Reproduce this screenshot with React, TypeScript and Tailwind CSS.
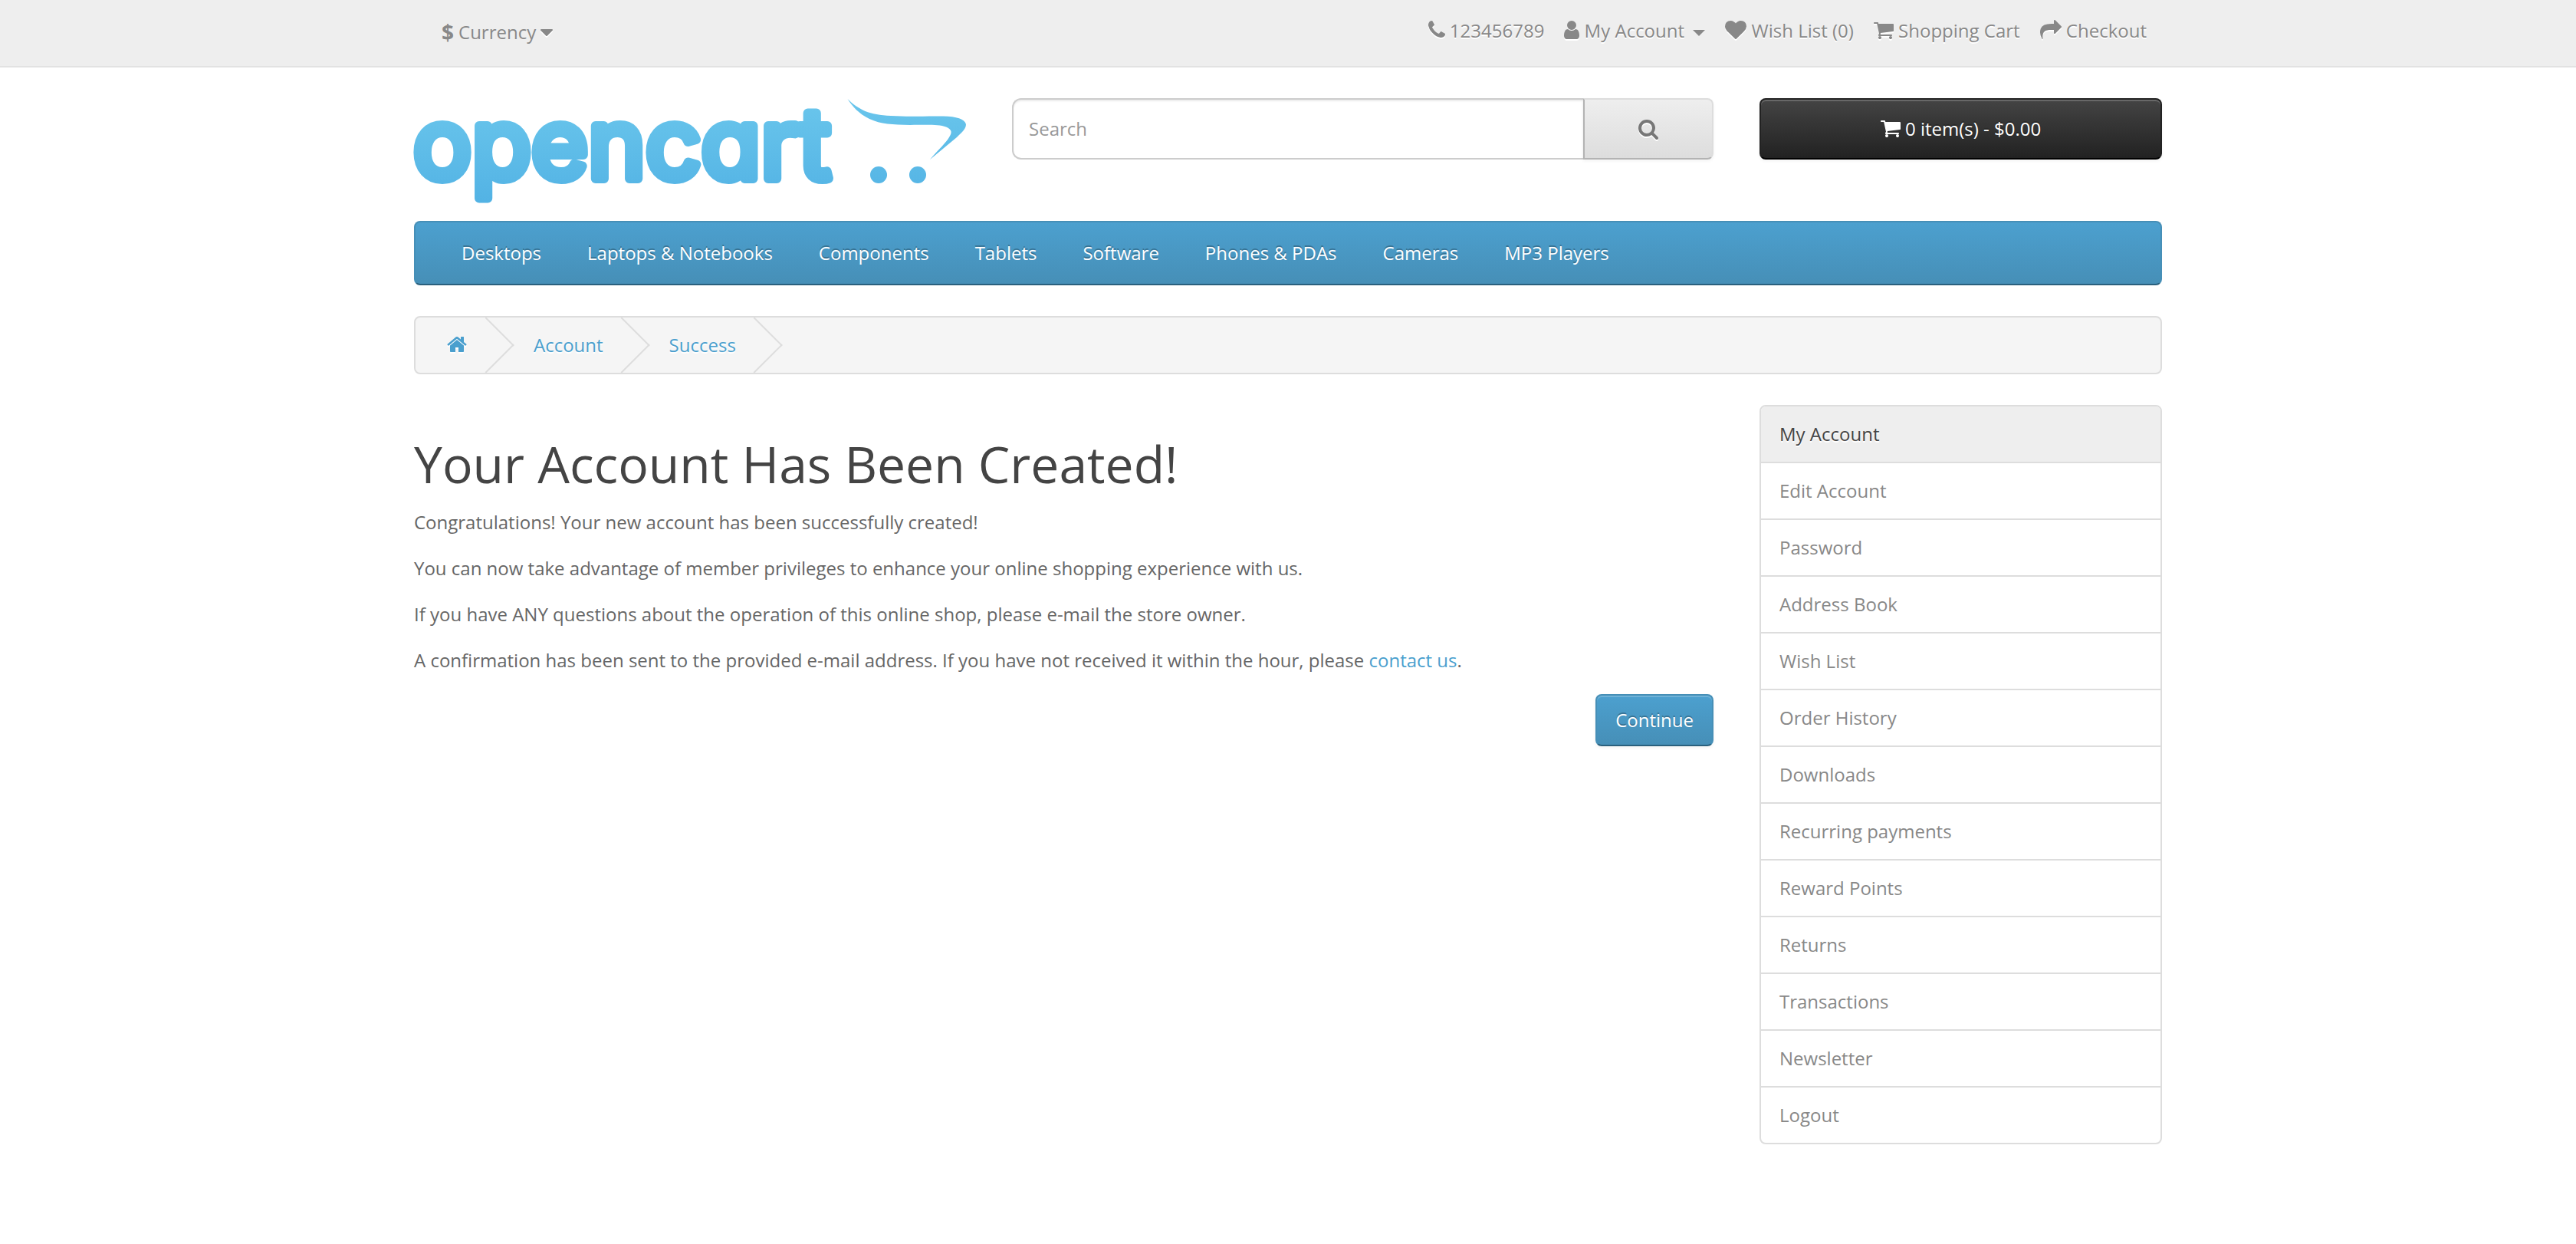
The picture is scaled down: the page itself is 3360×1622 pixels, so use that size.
import type { ReactNode } from 'react';

type IconName = 'phone' | 'user' | 'heart' | 'cart' | 'share' | 'search' | 'home';

const icons: Record<IconName, { x: number; width: number; d: string }> = {
  phone: {
    x: 192,
    width: 1408,
    d: 'M1600 1240q0 27-10 70.5t-21 68.5q-21 50-122 106-94 51-186 51-27 0-53-3.5t-57-12.5-47-14.5-55.5-20.5-49.5-18q-98-35-175-83-127-79-264-216t-216-264q-48-77-83-175-3-9-18-49.5t-20.5-55.5-14.5-47-12.5-57-3.5-53q0-92 51-186 56-101 106-122 25-11 68.5-21t70.5-10q14 0 21 3 18 6 53 76 11 19 30 54t35 63.5 31 53.5q3 4 17.5 25t21.5 35.5 7 28.5q0 20-28.5 50t-62 55-62 53-28.5 46q0 9 5 22.5t8.5 20.5 14 24 11.5 19q76 137 174 235t235 174q2 1 19 11.5t24 14 20.5 8.5 22.5 5q18 0 46-28.5t53-62 55-62 50-28.5q14 0 28.5 7t35.5 21.5 25 17.5q25 15 53.5 31t63.5 35 54 30q70 35 76 53 3 7 3 21z',
  },
  user: {
    x: 256,
    width: 1280,
    d: 'M1536 1399q0 109-62.5 187t-150.5 78h-854q-88 0-150.5-78t-62.5-187q0-85 8.5-160.5t31.5-152 58.5-131 94-89 134.5-34.5q131 128 313 128t313-128q76 0 134.5 34.5t94 89 58.5 131 31.5 152 8.5 160.5zm-256-887q0 159-112.5 271.5t-271.5 112.5-271.5-112.5-112.5-271.5 112.5-271.5 271.5-112.5 271.5 112.5 112.5 271.5z',
  },
  heart: {
    x: 0,
    width: 1792,
    d: 'M896 1664q-26 0-44-18l-624-602q-10-8-27.5-26t-55.5-65.5-68-97.5-53.5-121-23.5-138q0-220 127-344t351-124q62 0 126.5 21.5t120 58 95.5 68.5 76 68q36-36 76-68t95.5-68.5 120-58 126.5-21.5q224 0 351 124t127 344q0 221-229 450l-623 600q-18 18-44 18z',
  },
  cart: {
    x: 64,
    width: 1664,
    d: 'M704 1536q0 52-38 90t-90 38-90-38-38-90 38-90 90-38 90 38 38 90zm896 0q0 52-38 90t-90 38-90-38-38-90 38-90 90-38 90 38 38 90zm128-1088v512q0 24-16.5 42.5t-40.5 21.5l-1044 122q13 60 13 70 0 16-24 64h920q26 0 45 19t19 45-19 45-45 19h-1024q-26 0-45-19t-19-45q0-11 8-31.5t16-36 21.5-40 15.5-29.5l-177-823h-204q-26 0-45-19t-19-45 19-45 45-19h256q16 0 28.5 6.5t19.5 15.5 13 24.5 8 26 5.5 29.5 4.5 26h1201q26 0 45 19t19 45z',
  },
  share: {
    x: 0,
    width: 1792,
    d: 'M1792 640q0 26-19 45l-512 512q-19 19-45 19t-45-19-19-45v-256h-224q-98 0-175.5 6t-154 21.5-133 42.5-105.5 69.5-80 101-48.5 138.5-17.5 181q0 55 5 123 0 6 2.5 23.5t2.5 26.5q0 15-8.5 25t-23.5 10q-16 0-28-17-7-9-13-22t-13.5-30-10.5-24q-127-285-127-451 0-199 53-333 162-403 875-403h224v-256q0-26 19-45t45-19 45 19l512 512q19 19 19 45z',
  },
  search: {
    x: 64,
    width: 1664,
    d: 'M1216 832q0-185-131.5-316.5t-316.5-131.5-316.5 131.5-131.5 316.5 131.5 316.5 316.5 131.5 316.5-131.5 131.5-316.5zm512 832q0 52-38 90t-90 38q-54 0-90-38l-343-342q-179 124-399 124-143 0-273.5-55.5t-225-150-150-225-55.5-273.5 55.5-273.5 150-225 225-150 273.5-55.5 273.5 55.5 225 150 150 225 55.5 273.5q0 220-124 399l343 343q37 37 37 90z',
  },
  home: {
    x: 64,
    width: 1664,
    d: 'M1472 992v480q0 26-19 45t-45 19h-384v-384h-256v384h-384q-26 0-45-19t-19-45v-480q0-1 .5-3t.5-3l575-474 575 474q1 2 1 6zm223-69l-62 74q-8 9-21 11h-3q-13 0-21-7l-692-577-692 577q-12 8-24 7-13-2-21-11l-62-74q-8-10-7-23.5t11-21.5l719-599q32-26 76-26t76 26l244 204v-195q0-14 9-23t23-9h192q14 0 23 9t9 23v408l219 182q10 8 11 21.5t-7 23.5z',
  },
};

function Icon({ name, className = '' }: { name: IconName; className?: string }) {
  const { x, width, d } = icons[name];
  return (
    <svg
      aria-hidden="true"
      viewBox={`${x} 0 ${width} 1792`}
      className={`inline h-7 w-auto overflow-visible fill-current align-[-4px] ${className}`}
    >
      <path d={d} />
    </svg>
  );
}

const raised = 'drop-shadow-[0_2px_0_#fff]';

function TopLink({ icon, href, children }: { icon: IconName; href: string; children: ReactNode }) {
  return (
    <li>
      <a href={href} className="hover:text-[#444]">
        <Icon name={icon} className={raised} /> {children}
      </a>
    </li>
  );
}

function TopBar() {
  return (
    <nav className="h-[88px] border-b-2 border-[#e2e2e2] bg-[#eee] text-[#888] [text-shadow:0_2px_0_#fff]">
      <div className="mx-auto flex max-w-[2340px] justify-between px-[30px] pt-5">
        <button type="button" className="flex h-11 items-center gap-[6px] pl-9 leading-10">
          <strong className="text-[28px] leading-10">$</strong>
          <span>Currency</span>
          <svg aria-hidden="true" viewBox="0 0 16 9" className="h-[9px] w-4 overflow-visible fill-current drop-shadow-[0_2px_0_#fff]">
            <path d="M1 0h14a1 1 0 0 1 .7 1.7L8.7 8.7a1 1 0 0 1-1.4 0L.3 1.7A1 1 0 0 1 1 0z" />
          </svg>
        </button>
        <ul className="flex gap-[26px] pr-5">
          <TopLink icon="phone" href="#contact">123456789</TopLink>
          <TopLink icon="user" href="#account">
            My Account{' '}
            <span className="ml-[5px] inline-block border-x-8 border-t-8 border-x-transparent border-t-current align-middle" />
          </TopLink>
          <TopLink icon="heart" href="#wishlist">Wish List (0)</TopLink>
          <TopLink icon="cart" href="#cart">Shopping Cart</TopLink>
          <TopLink icon="share" href="#checkout">Checkout</TopLink>
        </ul>
      </div>
    </nav>
  );
}

function Logo() {
  return (
    <svg viewBox="0 0 720 140" role="img" aria-label="opencart" className="w-full overflow-visible">
      <defs>
        <linearGradient id="sky" gradientUnits="userSpaceOnUse" x1="0" y1="0" x2="0" y2="140">
          <stop offset="0" stopColor="#6ac6ec" />
          <stop offset="1" stopColor="#52b2e4" />
        </linearGradient>
      </defs>
      <g fill="url(#sky)">
        <text
          x="-1"
          y="105"
          fontSize="127"
          stroke="url(#sky)"
          strokeWidth="12"
          strokeLinejoin="round"
          className="font-['Inter',sans-serif] font-normal [font-feature-settings:'cv11']"
        >
          opencart
        </text>
        <path d="M565.5 1C580 15 594 22 622 23C648 24.500 668 23 690 23.500C708 24 718 27 720 34C720 40 715 44 708 51L673 80C685 66 694 58 698 51C702 45 702 41 694 37.500C684 34 668 35 647 35C624 34.500 609 34 594 27C580 20 572 11 565.500 1Z" />
        <circle cx="606" cy="100" r="11" />
        <circle cx="657" cy="100" r="11" />
      </g>
    </svg>
  );
}

function Header() {
  return (
    <header className="mt-10 grid grid-cols-12 items-start gap-x-[60px]">
      <a href="#home" className="col-span-4">
        <Logo />
      </a>
      <form role="search" className="col-span-5 flex h-20">
        <input
          type="text"
          name="search"
          aria-label="Search"
          placeholder="Search"
          className="min-w-0 flex-1 rounded-l-xl border-2 border-r-0 border-[#ccc] bg-white px-5 shadow-[inset_0_2px_2px_rgba(0,0,0,0.075)] placeholder:text-[#999]"
        />
        <button
          type="button"
          aria-label="Search"
          className="flex w-[170px] items-center justify-center rounded-r-lg border-2 border-t-[#ddd] border-r-[#ddd] border-b-[#b3b3b3] border-l-[#b3b3b3] bg-linear-to-b from-[#eee] to-[#ddd] text-[#777] shadow-[0_2px_4px_rgba(0,0,0,0.05)]"
        >
          <Icon name="search" className="drop-shadow-[0_2px_0_#fff]" />
        </button>
      </form>
      <button
        type="button"
        className="col-span-3 h-20 rounded-lg border-2 border-x-[#222] border-t-[#222] border-b-black bg-linear-to-b from-[#444] to-[#222] leading-10 text-white shadow-[inset_0_2px_0_rgba(255,255,255,0.2),0_2px_4px_rgba(0,0,0,0.05)] [text-shadow:0_-2px_0_rgba(0,0,0,0.25)]"
      >
        <Icon name="cart" /> 0 item(s) - $0.00
      </button>
    </header>
  );
}

const categories = ['Desktops', 'Laptops & Notebooks', 'Components', 'Tablets', 'Software', 'Phones & PDAs', 'Cameras', 'MP3 Players'];

function Menu() {
  return (
    <nav className="mt-5 rounded-lg border-2 border-x-[#468fb7] border-t-[#468fb7] border-b-[#2a607d] bg-linear-to-b from-[#4ca0cf] to-[#468fb7] px-[30px]">
      <ul className="flex">
        {categories.map((name) => (
          <li key={name}>
            <a href="#category" className="block px-[30px] py-5 text-white [text-shadow:0_-2px_0_rgba(0,0,0,0.25)]">
              {name}
            </a>
          </li>
        ))}
      </ul>
    </nav>
  );
}

function Breadcrumb() {
  const crumbs: { key: string; label: ReactNode }[] = [
    { key: 'home', label: <Icon name="home" className="drop-shadow-[0_2px_0_#fff]" /> },
    { key: 'account', label: 'Account' },
    { key: 'success', label: 'Success' },
  ];
  return (
    <ul className="mt-10 flex gap-[6px] overflow-hidden rounded-lg border-2 border-[#ddd] bg-[#f5f5f5] py-4">
      {crumbs.map(({ key, label }) => (
        <li key={key} className="relative px-10 [text-shadow:0_2px_0_#fff] first:px-[41px]">
          <a href={`#${key}`} aria-label={key} className="text-[#4a9fce]">
            {label}
          </a>
          <span className="absolute -top-[6px] -right-[10px] size-[52px] -rotate-45 border-r-2 border-b-2 border-[#ddd]" />
        </li>
      ))}
    </ul>
  );
}

const accountLinks = [
  'My Account', 'Edit Account', 'Password', 'Address Book', 'Wish List', 'Order History', 'Downloads',
  'Recurring payments', 'Reward Points', 'Returns', 'Transactions', 'Newsletter', 'Logout',
];

function Sidebar() {
  return (
    <aside className="col-span-3">
      <ul className="divide-y-2 divide-[#ddd] overflow-hidden rounded-lg border-2 border-[#ddd]">
        {accountLinks.map((name, i) => (
          <li key={name}>
            <a
              href="#account"
              className={
                i === 0
                  ? 'block bg-[#eee] px-6 py-4 text-[#444] [text-shadow:0_2px_0_#fff]'
                  : 'block px-6 py-4 text-[#888]'
              }
            >
              {name}
            </a>
          </li>
        ))}
      </ul>
    </aside>
  );
}

export default function App() {
  return (
    <div className="min-h-screen bg-white font-['Open_Sans',sans-serif] text-[24px] leading-10 text-[#666]">
      <TopBar />
      <div className="mx-auto max-w-[2340px] px-[30px]">
        <Header />
        <Menu />
        <Breadcrumb />
        <div className="mt-10 grid grid-cols-12 items-start gap-x-[60px]">
          <main className="col-span-9 pt-10">
            <h1 className="mb-5 text-[66px] leading-[73px] text-[#444]">Your Account Has Been Created!</h1>
            <div className="space-y-5">
              <p>Congratulations! Your new account has been successfully created!</p>
              <p>You can now take advantage of member privileges to enhance your online shopping experience with us.</p>
              <p>If you have ANY questions about the operation of this online shop, please e-mail the store owner.</p>
              <p>
                A confirmation has been sent to the provided e-mail address. If you have not received it within the
                hour, please <a href="#contact" className="text-[#4a9fce]">contact us</a>.
              </p>
            </div>
            <div className="mt-6 flex justify-end">
              <a
                href="#account"
                className="rounded-lg border-2 border-x-[#468fb7] border-t-[#468fb7] border-b-[#2a607d] bg-linear-to-b from-[#4ca0cf] to-[#468fb7] px-6 py-3 text-white shadow-[inset_0_2px_0_rgba(255,255,255,0.2),0_2px_4px_rgba(0,0,0,0.05)] [text-shadow:0_-2px_0_rgba(0,0,0,0.25)]"
              >
                Continue
              </a>
            </div>
          </main>
          <Sidebar />
        </div>
      </div>
    </div>
  );
}
